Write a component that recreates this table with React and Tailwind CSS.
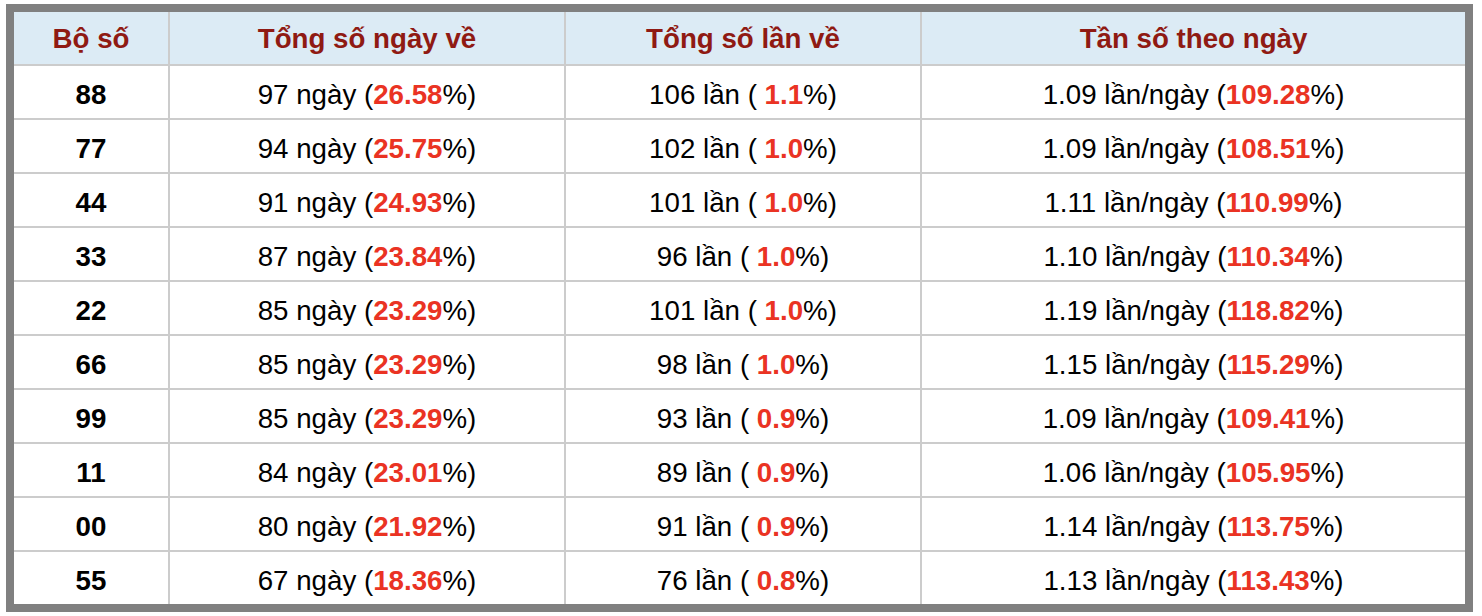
const rows = [
  ["88", "97", "26.58", "106", "1.1", "1.09", "109.28"],
  ["77", "94", "25.75", "102", "1.0", "1.09", "108.51"],
  ["44", "91", "24.93", "101", "1.0", "1.11", "110.99"],
  ["33", "87", "23.84", "96", "1.0", "1.10", "110.34"],
  ["22", "85", "23.29", "101", "1.0", "1.19", "118.82"],
  ["66", "85", "23.29", "98", "1.0", "1.15", "115.29"],
  ["99", "85", "23.29", "93", "0.9", "1.09", "109.41"],
  ["11", "84", "23.01", "89", "0.9", "1.06", "105.95"],
  ["00", "80", "21.92", "91", "0.9", "1.14", "113.75"],
  ["55", "67", "18.36", "76", "0.8", "1.13", "113.43"],
];

const td = "border-[2px] border-[#cccccc] text-center px-0 pb-0 pt-[6px] leading-none";

export default function App() {
  return (
    <div className="bg-white w-[1482px] h-[616px] pt-[4px] pl-[6px]" style={{ fontFamily: '"Liberation Sans", Arial, sans-serif' }}>
      <table className="w-[1467px] border-[8px] border-[#808080] border-collapse table-fixed text-[27.7px]">
        <colgroup>
          <col className="w-[159px]" />
          <col className="w-[396px]" />
          <col className="w-[356px]" />
          <col />
        </colgroup>
        <thead>
          <tr className="bg-[#dcebf5] h-[57px]">
            {["Bộ số", "Tổng số ngày về", "Tổng số lần về", "Tần số theo ngày"].map((h, i) => (
              <th key={i} className="border-[2px] border-[#cccccc] text-[#8f1a13] font-bold text-center px-0 pb-0 pt-[2px] leading-none">
                {h}
              </th>
            ))}
          </tr>
        </thead>
        <tbody>
          {rows.map((r, i) => (
            <tr key={r[0]} className={i === rows.length - 1 ? "h-[57px] text-black" : "h-[54px] text-black"}>
              <td className={td + " font-bold"}>{r[0]}</td>
              <td className={td}>
                {r[1]} ngày (<span className="text-[#ea3323] font-bold">{r[2]}</span>%)
              </td>
              <td className={td}>
                {r[3]} lần ( <span className="text-[#ea3323] font-bold">{r[4]}</span>%)
              </td>
              <td className={td}>
                {r[5]} lần/ngày (<span className="text-[#ea3323] font-bold">{r[6]}</span>%)
              </td>
            </tr>
          ))}
        </tbody>
      </table>
    </div>
  );
}
